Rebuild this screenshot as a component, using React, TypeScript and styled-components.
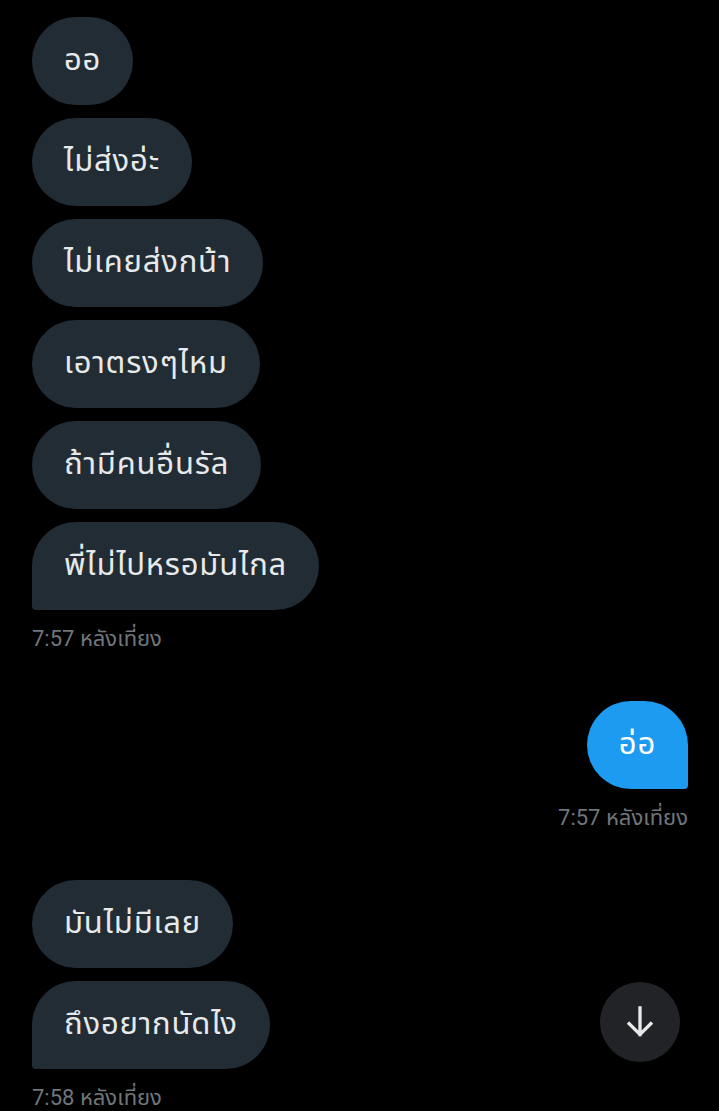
import React from 'react'
import styled, { createGlobalStyle } from 'styled-components'

const GlobalStyle = createGlobalStyle`
  html, body {
    margin: 0;
    padding: 0;
    background: #000;
  }
  body {
    font-family: Roboto, "Noto Sans Thai", "Noto Sans", sans-serif;
  }
`

const StyledPage = styled.div`
  position: relative;
  height: 1111px;
  overflow: hidden;
  padding: 17px 31px 0 32px;
  box-sizing: border-box;
  display: flex;
  flex-direction: column;
`
const StyledGroup = styled.div<{ mine?: boolean }>`
  display: flex;
  flex-direction: column;
  align-items: ${props => (props.mine ? 'flex-end' : 'flex-start')};
  gap: 13px;
  & + & {
    margin-top: 48px;
  }
`
const StyledBubble = styled.div<{ mine?: boolean; last?: boolean }>`
  box-sizing: border-box;
  height: 88px;
  padding: 0 32px;
  display: flex;
  align-items: center;
  border-radius: 44px;
  background: ${props => (props.mine ? '#1d9bf0' : '#222c35')};
  color: ${props => (props.mine ? '#ffffff' : '#e7e9ea')};
  font-family: "Noto Sans Thai", "Noto Sans", Roboto, sans-serif;
  font-size: 31px;
  letter-spacing: 0.8px;
  line-height: 40px;
  white-space: nowrap;
  ${props =>
    props.last ? (props.mine ? 'border-bottom-right-radius: 4px;' : 'border-bottom-left-radius: 4px;') : ''}
`
const StyledTime = styled.div`
  margin-top: 2px;
  color: #71767b;
  font-size: 22px;
  line-height: 28px;
  font-family: Roboto, "Noto Sans Thai", sans-serif;
`
const StyledScrollButton = styled.button`
  position: absolute;
  right: 39px;
  bottom: 49px;
  width: 80px;
  height: 80px;
  border: none;
  border-radius: 50%;
  background: #212327;
  color: #e7e9ea;
  display: flex;
  align-items: center;
  justify-content: center;
  padding: 0;
`

type Group = { mine?: boolean; texts: string[]; time: string }

const groups: Group[] = [
  {
    texts: ['ออ', 'ไม่ส่งอ่ะ', 'ไม่เคยส่งกน้า', 'เอาตรงๆไหม', 'ถ้ามีคนอื่นรัล', 'พี่ไม่ไปหรอมันไกล'],
    time: '7:57 หลังเที่ยง',
  },
  { mine: true, texts: ['อ่อ'], time: '7:57 หลังเที่ยง' },
  { texts: ['มันไม่มีเลย', 'ถึงอยากนัดไง'], time: '7:58 หลังเที่ยง' },
]

const App: React.FC = () => {
  return (
    <StyledPage>
      <GlobalStyle />
      {groups.map((group, gi) => (
        <StyledGroup key={gi} mine={group.mine}>
          {group.texts.map((text, i) => (
            <StyledBubble key={i} mine={group.mine} last={i === group.texts.length - 1}>
              {text}
            </StyledBubble>
          ))}
          <StyledTime>{group.time}</StyledTime>
        </StyledGroup>
      ))}
      <StyledScrollButton>
        <svg width="40" height="40" viewBox="0 0 24 24" fill="none" stroke="currentColor" strokeWidth="2" strokeLinecap="square">
          <path d="M12 3.5v16M5.5 13l6.5 6.5 6.5-6.5" />
        </svg>
      </StyledScrollButton>
    </StyledPage>
  )
}

export default App
